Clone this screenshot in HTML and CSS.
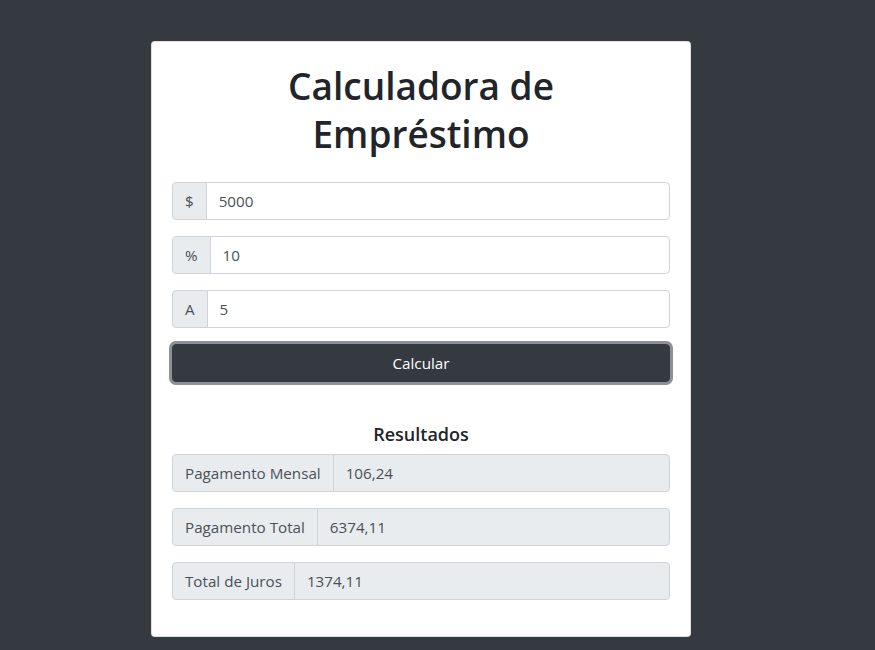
FILE: index.html
```html
<!DOCTYPE html>
<html lang="pt">
<head>
<meta charset="utf-8">
<title>Calculadora de Empréstimo</title>
<link rel="stylesheet" href="styles.css">
</head>
<body>
<div class="page">
  <div class="card">
    <h1 class="title">Calculadora de Empréstimo</h1>
    <form class="form">
      <div class="input-group">
        <span class="addon">$</span>
        <input class="control" type="text" value="5000">
      </div>
      <div class="input-group">
        <span class="addon">%</span>
        <input class="control" type="text" value="10">
      </div>
      <div class="input-group">
        <span class="addon">A</span>
        <input class="control" type="text" value="5">
      </div>
      <button type="button" class="btn">Calcular</button>
    </form>
    <div class="results">
      <h5 class="results-title">Resultados</h5>
      <div class="input-group">
        <span class="addon">Pagamento Mensal</span>
        <input class="control readonly" type="text" value="106,24" readonly>
      </div>
      <div class="input-group">
        <span class="addon">Pagamento Total</span>
        <input class="control readonly" type="text" value="6374,11" readonly>
      </div>
      <div class="input-group">
        <span class="addon">Total de Juros</span>
        <input class="control readonly" type="text" value="1374,11" readonly>
      </div>
    </div>
  </div>
</div>
</body>
</html>
```

FILE: styles.css
```css
* { box-sizing: border-box; }

html, body {
  margin: 0;
  padding: 0;
  background: #343a40;
  height: 100%;
}

body {
  font-family: "Open Sans", "Noto Sans", sans-serif;
  color: #212529;
  font-size: 16px;
  line-height: 1.5;
}

.page {
  padding-top: 41px;
  padding-left: 151px;
}

.card {
  width: 540px;
  background: #fff;
  border: 1px solid rgba(0,0,0,.125);
  border-radius: 4px;
  padding: 20px;
}

.title {
  margin: 0 auto 24px;
  max-width: 420px;
  text-align: center;
  font-size: 37px;
  font-weight: 600;
  line-height: 48px;
  color: #212529;
}

.form { margin: 0; }

.input-group {
  display: flex;
  height: 38px;
  margin-bottom: 16px;
}

.addon {
  display: flex;
  align-items: center;
  padding: 0 12px;
  background: #e9ecef;
  border: 1px solid #ced4da;
  border-radius: 4px 0 0 4px;
  color: #495057;
  font-size: 15.2px;
  white-space: nowrap;
}

.control {
  flex: 1;
  min-width: 0;
  height: 38px;
  margin: 0 0 0 -1px;
  padding: 0 12px;
  border: 1px solid #ced4da;
  border-radius: 0 4px 4px 0;
  background: #fff;
  color: #495057;
  font-family: inherit;
  font-size: 15.2px;
  outline: none;
}

.control.readonly { background: #e9ecef; }

.btn {
  display: block;
  width: 100%;
  height: 38px;
  margin: 0;
  border: 1px solid #343a40;
  border-radius: 4px;
  background: #343a40;
  color: #fff;
  font-family: inherit;
  font-size: 15.2px;
  box-shadow: 0 0 0 3px rgba(135,139,143,.95);
}

.results { margin-top: 40px; }

.results-title {
  margin: 0 0 8px;
  text-align: center;
  font-size: 18px;
  font-weight: 600;
  line-height: 24px;
  color: #212529;
}
```
